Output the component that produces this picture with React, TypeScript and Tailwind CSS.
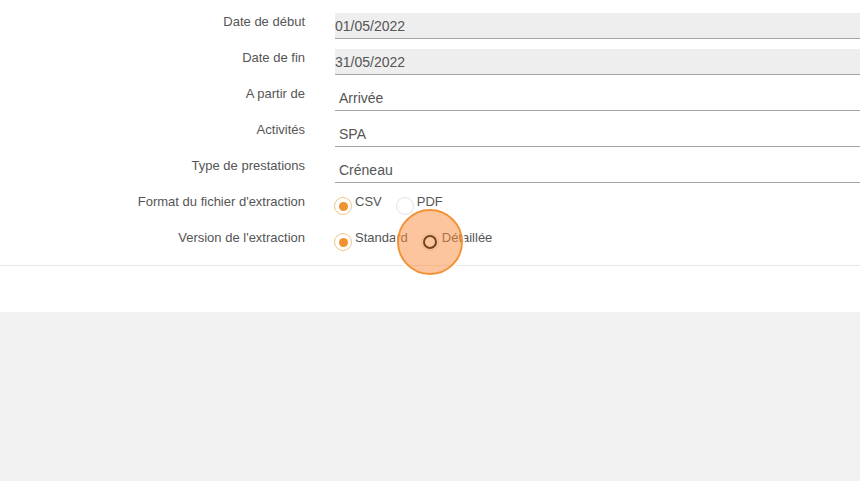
import React from 'react'

const FIELDS = [
  { label: 'Date de début', value: '01/05/2022', readOnly: true },
  { label: 'Date de fin', value: '31/05/2022', readOnly: true },
  { label: 'A partir de', value: 'Arrivée', readOnly: false },
  { label: 'Activités', value: 'SPA', readOnly: false },
  { label: 'Type de prestations', value: 'Créneau', readOnly: false },
]

function Radio({ checked, label, clicked }: { checked?: boolean; label: string; clicked?: boolean }) {
  return (
    <div className="flex items-start">
      <div className="relative mt-1 h-[18px] w-[18px] shrink-0">
        <div
          className={`flex h-[18px] w-[18px] items-center justify-center rounded-full border bg-white ${
            checked ? 'border-[#f3c48c]' : 'border-[#e2e2e2]'
          }`}
        >
          {checked && <div className="h-[9px] w-[9px] rounded-full bg-[#f0922e]" />}
        </div>
        {clicked && (
          <div className="absolute left-1/2 top-1/2 z-10 flex h-[66px] w-[66px] -translate-x-1/2 -translate-y-1/2 items-center justify-center rounded-full border-2 border-[#f29236] bg-[rgba(251,140,60,0.5)] shadow-[0_0_0_2px_rgba(255,255,255,0.9)]">
            <div className="h-[14px] w-[14px] rounded-full border-2 border-[#6e4520]" />
          </div>
        )}
      </div>
      <span className="ml-[3px] pt-px text-[13px] leading-4 text-[#555]">{label}</span>
    </div>
  )
}

export default function App() {
  return (
    <div className="min-h-[481px] bg-[#f2f2f2] font-['Liberation_Sans',Arial,sans-serif]">
      <div className="bg-white">
        <div className="flex flex-col gap-[10px] border-b border-[#e6e6e6] pb-[11px] pt-[13px]">
          {FIELDS.map((f) => (
            <div key={f.label} className="flex items-start">
              <div className="w-[305px] shrink-0 pt-px text-right text-[13px] leading-4 text-[#555]">{f.label}</div>
              <div
                className={`ml-[30px] flex h-[26px] flex-1 items-center border-b border-[#a3a3a3] pt-px text-[14px] text-[#555] ${
                  f.readOnly ? 'bg-[#eeeeee]' : 'pl-1'
                }`}
              >
                {f.value}
              </div>
            </div>
          ))}
          <div className="flex h-[26px] items-start">
            <div className="w-[305px] shrink-0 pt-px text-right text-[13px] leading-4 text-[#555]">
              Format du fichier d'extraction
            </div>
            <div className="ml-[29px] flex gap-[14px]">
              <Radio checked label="CSV" />
              <Radio label="PDF" />
            </div>
          </div>
          <div className="flex h-[25px] items-start">
            <div className="w-[305px] shrink-0 pt-px text-right text-[13px] leading-4 text-[#555]">
              Version de l'extraction
            </div>
            <div className="ml-[29px] flex gap-[13px]">
              <Radio checked label="Standard" />
              <Radio label="Détaillée" clicked />
            </div>
          </div>
        </div>
        <div className="h-[46px]" />
      </div>
    </div>
  )
}
